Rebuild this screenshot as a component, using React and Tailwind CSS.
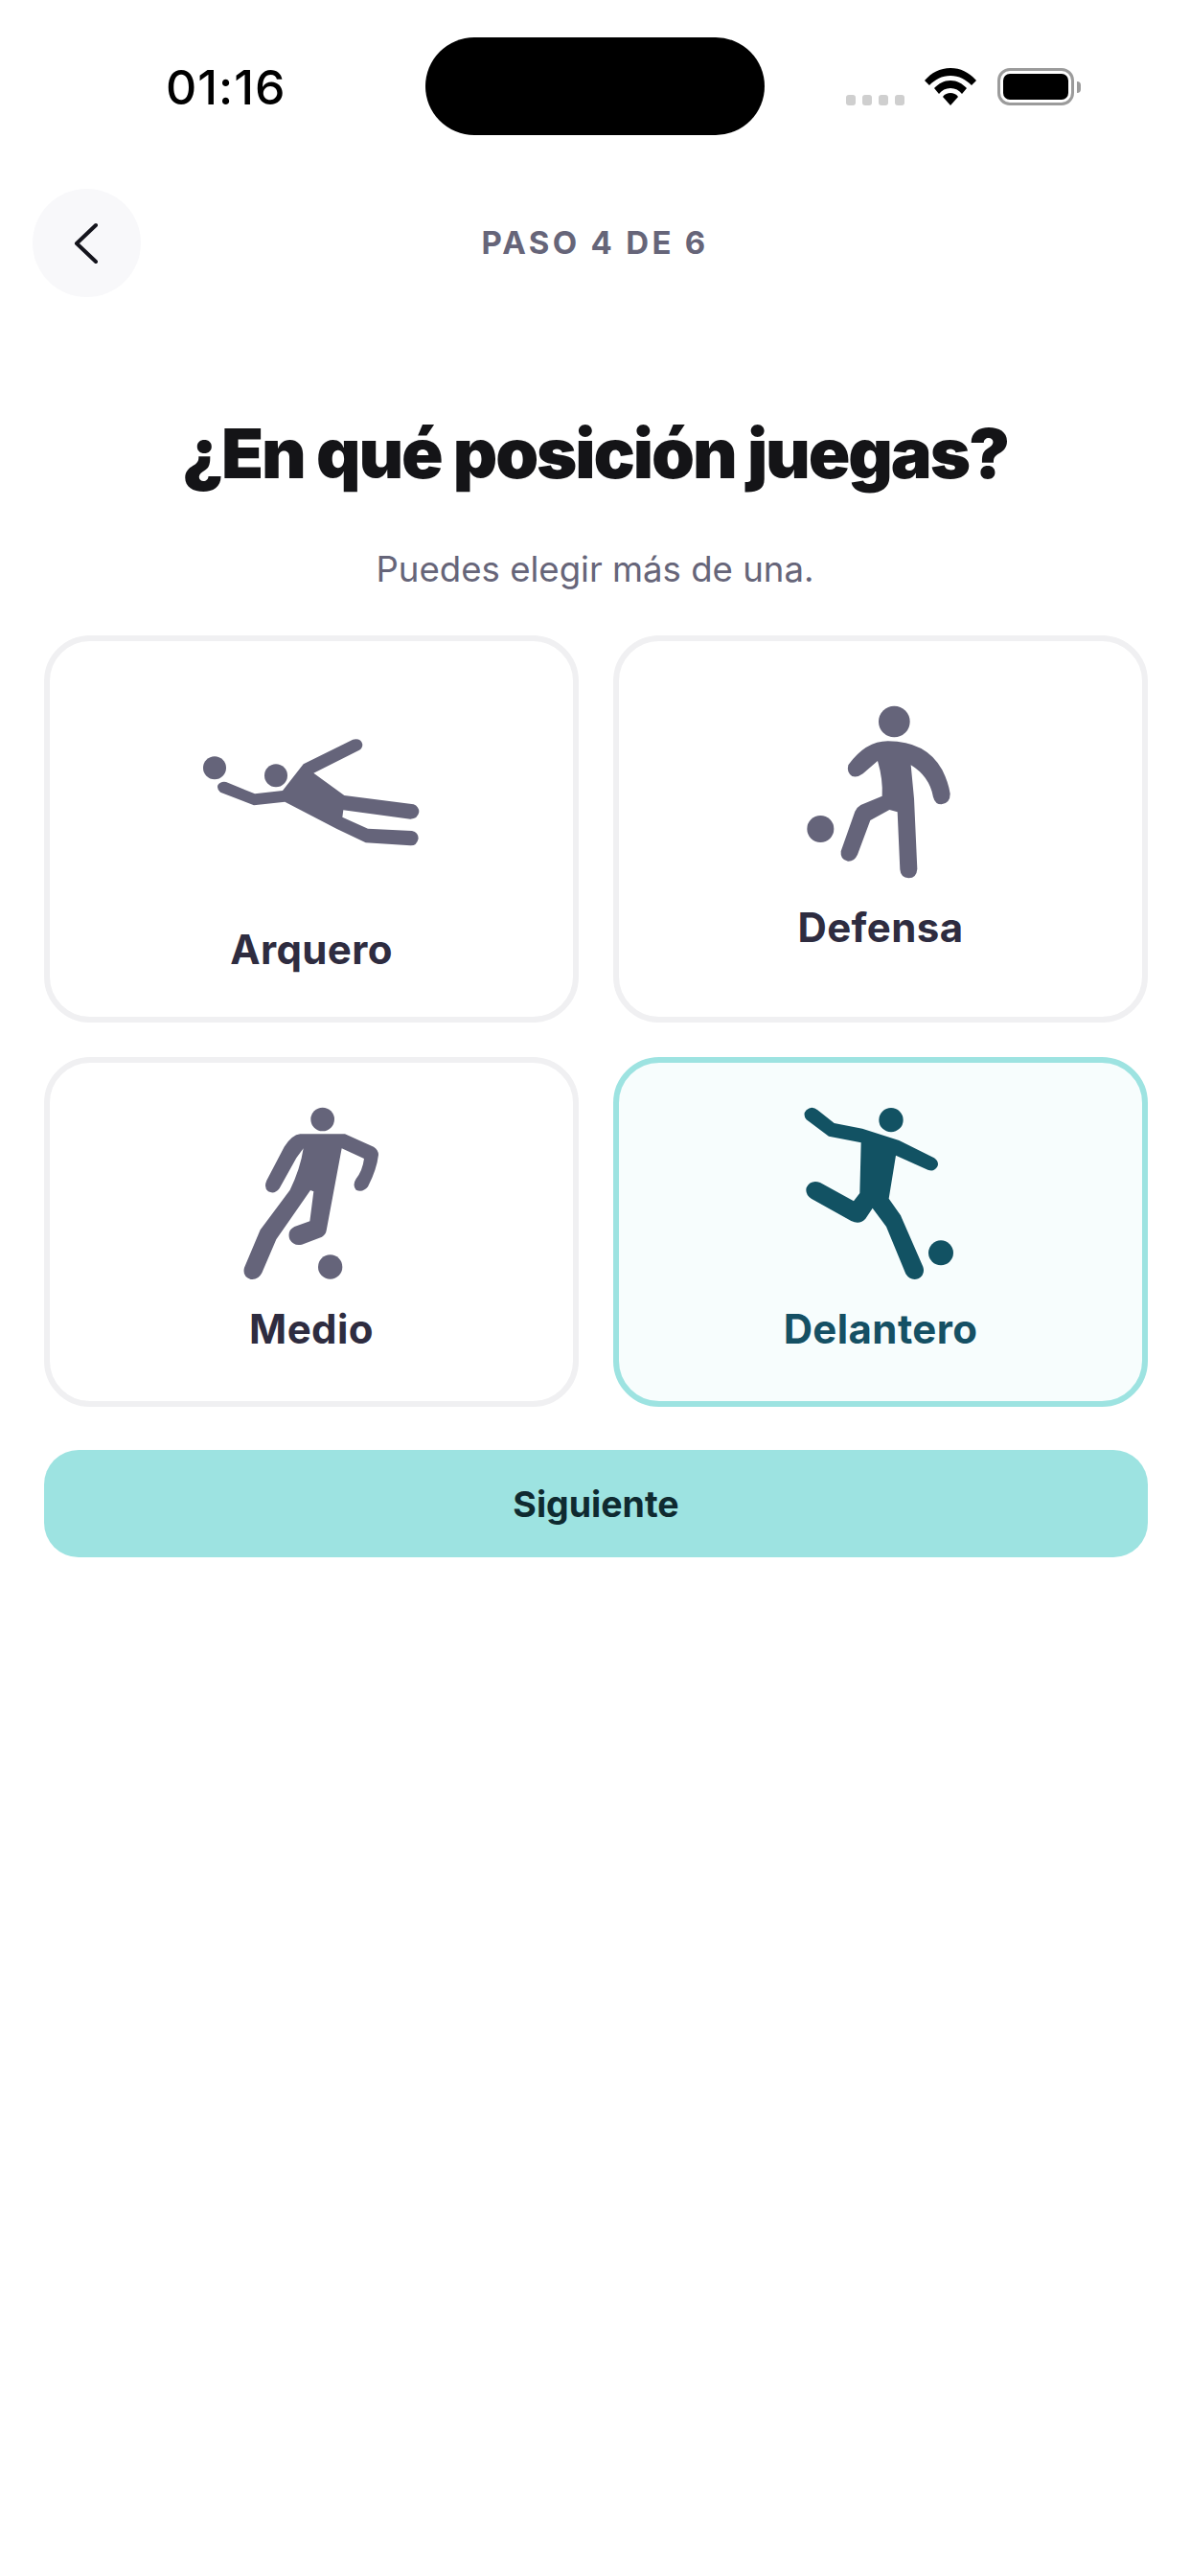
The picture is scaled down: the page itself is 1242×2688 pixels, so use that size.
import React from 'react';

const GRAY = '#65647a';
const TEAL = '#125263';

const Arquero = () => (
    <svg viewBox="0 0 900 600" className="w-[300px] h-[200px] translate-x-[5px]" fill={GRAY}>
        <circle cx="132" cy="244" r="36" />
        <circle cx="324" cy="268" r="36" />
        <path d="M168 288 L258 325 L345 315 L410 232 L565 155 Q590 150 595 170 Q595 182 585 188 L442 260 L538 330 L755 358 Q772 365 772 382 Q768 404 745 404 L535 376 L532 398 L612 434 L750 441 Q770 445 770 465 Q765 488 745 487 L605 478 L515 435 L352 350 L255 361 L150 320 Q138 310 142 298 Q150 285 168 288 Z" />
    </svg>
);

const Defensa = () => (
    <svg viewBox="0 0 600 660" className="w-[200px] h-[220px] -translate-x-[9px]" fill={GRAY}>
        <circle cx="370" cy="129" r="49" />
        <circle cx="139" cy="465" r="42" />
        <path d="M350 190 Q470 190 520 280 Q540 320 545 355 Q545 385 518 388 Q498 388 492 365 Q480 300 422 265 L432 370 L442 590 Q440 618 415 619 Q390 618 388 592 L380 412 L355 405 L295 438 L255 545 Q245 567 225 566 Q200 562 203 535 L247 410 Q252 398 265 390 L332 362 Q335 310 318 252 L272 292 Q255 305 238 300 Q220 288 226 265 Q280 190 350 190 Z" />
    </svg>
);

const Medio = () => (
    <svg viewBox="0 0 600 630" className="w-[200px] h-[210px] translate-x-[5px]" fill={GRAY}>
        <circle cx="320" cy="84" r="37" />
        <circle cx="344" cy="546" r="38" />
        <path d="M250 130 L390 130 L480 170 Q495 180 495 195 Q490 240 462 295 Q445 315 425 305 Q412 290 425 270 Q445 245 450 207 L380 175 L332 432 Q330 445 318 452 L255 476 Q230 482 217 460 Q208 432 232 420 L280 403 L292 310 L282 306 L175 460 L130 565 Q118 588 95 585 Q68 575 75 548 L125 430 L218 305 Q250 240 260 175 L238 205 L185 300 Q170 320 150 310 Q135 298 145 275 L200 170 Q225 132 250 130 Z" />
    </svg>
);

const Delantero = () => (
    <svg viewBox="0 0 600 630" className="w-[200px] h-[210px] translate-x-[1px]" fill={TEAL}>
        <circle cx="330" cy="86" r="38" />
        <circle cx="486" cy="502" r="39" />
        <path d="M100 55 L152 96 L240 113 L355 150 L465 205 Q482 218 475 232 Q465 250 445 242 L345 197 L323 332 L360 385 L430 545 Q438 570 415 583 Q390 590 376 568 L315 420 L272 362 L250 395 Q232 415 205 402 L80 332 Q60 318 65 298 Q78 272 108 282 L213 340 L232 315 L236 157 L135 137 L65 85 Q52 68 65 55 Q82 40 100 55 Z" />
    </svg>
);

const StatusBar = () => (
    <div className="flex items-start h-[141px] pt-[39px]">
        <div className="w-[444px] pl-[173px] pt-[30px] text-[50px] leading-[44px] font-medium tracking-[1px] text-black">01:16</div>
        <div className="w-[354px] h-[102px] bg-black rounded-[51px]"></div>
        <div className="flex items-center pl-[85px] pt-[32px]">
            <div className="flex gap-[7px] mt-[28px]">
                <span className="w-[10px] h-[11px] rounded-[3px] bg-[#cfcfcf]"></span>
                <span className="w-[10px] h-[11px] rounded-[3px] bg-[#cfcfcf]"></span>
                <span className="w-[10px] h-[11px] rounded-[3px] bg-[#cfcfcf]"></span>
                <span className="w-[10px] h-[11px] rounded-[3px] bg-[#cfcfcf]"></span>
            </div>
            <svg viewBox="0 0 54 39" className="w-[54px] h-[39px] ml-[21px]" fill="#000">
                <path d="M27 0 C38 0 47 5 54 13 L49 18 C43 12 36 8 27 8 C18 8 11 12 5 18 L0 13 C7 5 16 0 27 0 Z" />
                <path d="M27 13 C34 13 39 16 44 21 L39 27 C36 23 32 21 27 21 C22 21 18 23 15 27 L10 21 C15 16 20 13 27 13 Z" />
                <path d="M27 26 C30 26 33 27 35 30 L27 39 L19 30 C21 27 24 26 27 26 Z" />
            </svg>
            <div className="ml-[22px] w-[80px] h-[39px] rounded-[13px] border-[3px] border-[#9b9b9b] p-[3px]">
                <div className="w-full h-full rounded-[7px] bg-black"></div>
            </div>
            <div className="w-[4px] h-[12px] rounded-r-[4px] bg-[#9b9b9b] ml-[3px]"></div>
        </div>
    </div>
);

const Card = ({ label, icon, selected, className, labelClass }) => (
    <div className={`flex flex-col items-center rounded-[48px] border-[6px] ${selected ? 'border-[#9de3e1] bg-[#f7fdfd]' : 'border-[#f0f0f2] bg-white'} ${className}`}>
        {icon}
        <div className={`text-[42px] leading-[50px] font-bold tracking-[0.4px] ${selected ? 'text-[#155064]' : 'text-[#2e2c40]'} ${labelClass}`}>{label}</div>
    </div>
);

export default function App() {
    return (
        <div className="w-[1242px] h-[2688px] bg-white" style={{ fontFamily: 'Inter, sans-serif' }}>
            <StatusBar />

            <div className="relative flex items-center justify-center h-[113px] mt-[56px]">
                <button className="absolute left-[34px] top-0 w-[113px] h-[113px] rounded-full bg-[#f8f8fa] flex items-center justify-center">
                    <svg viewBox="0 0 28 44" className="w-[28px] h-[44px] -translate-x-[1px]" fill="none" stroke="#14141c" strokeWidth="4" strokeLinecap="round" strokeLinejoin="round">
                        <path d="M24 3 L4 22 L24 41" />
                    </svg>
                </button>
                <div className="text-[33px] font-bold tracking-[0.1em] text-[#666579]">PASO 4 DE 6</div>
            </div>

            <h1 className="mt-[120px] text-center text-[72px] leading-[86px] font-black tracking-[-2.1px] text-[#141417]">¿En qué posición juegas?</h1>
            <p className="mt-[48px] text-center text-[36.6px] leading-[60px] text-[#666579]">Puedes elegir más de una.</p>

            <div className="mt-[39px] pl-[46px] pr-[44px] grid grid-cols-2 gap-[36px]">
                <Card label="Arquero" icon={<Arquero />} className="pt-[51px] pb-[45px]" labelClass="mt-[46px]" />
                <Card label="Defensa" icon={<Defensa />} className="pt-[41px]" labelClass="mt-[13px]" />
                <Card label="Medio" icon={<Medio />} className="pt-[31px] pb-[50px]" labelClass="mt-[12px]" />
                <Card label="Delantero" icon={<Delantero />} selected className="pt-[31px]" labelClass="mt-[12px]" />
            </div>

            <button className="mt-[45px] ml-[46px] w-[1152px] h-[112px] rounded-[36px] bg-[#9de3e1] pt-[2px] text-[37.5px] font-bold text-[#0f2a30]">Siguiente</button>
        </div>
    );
}
